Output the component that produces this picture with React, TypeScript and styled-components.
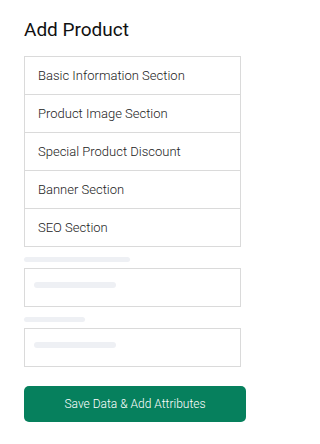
import styled, { createGlobalStyle } from 'styled-components';

const GlobalStyle = createGlobalStyle`
  * { box-sizing: border-box; }
  body {
    margin: 0;
    background: #ffffff;
    font-family: Roboto, 'Liberation Sans', Arial, sans-serif;
  }
`;

const sections = [
  'Basic Information Section',
  'Product Image Section',
  'Special Product Discount',
  'Banner Section',
  'SEO Section',
];

const Page = styled.div`
  width: 270px;
  padding: 18px 24px 0;
  display: flex;
  flex-direction: column;
`;

const Title = styled.h1`
  margin: 0 0 14px;
  font-size: 19px;
  line-height: 24px;
  font-weight: 400;
  color: #111111;
`;

const SectionList = styled.ul`
  width: 217px;
  margin: 0;
  padding: 0;
  list-style: none;
  border: 1px solid #dadada;
`;

const SectionRow = styled.li`
  height: 38px;
  padding: 11px 13px 0;
  font-size: 13px;
  line-height: 16px;
  font-weight: 300;
  color: #222222;
  border-top: 1px solid #dadada;

  &:first-child {
    height: 37px;
    border-top: none;
  }
`;

const Skeleton = styled.div<{ $w: number; $h?: number }>`
  width: ${(p) => p.$w}px;
  height: ${(p) => p.$h ?? 5}px;
  border-radius: 3px;
  background: #eef0f4;
`;

const Field = styled.div<{ $top: number }>`
  display: flex;
  flex-direction: column;
  gap: 6px;
  margin-top: ${(p) => p.$top}px;
`;

const InputBox = styled.div`
  width: 217px;
  height: 39px;
  padding: 13px 0 0 9px;
  border: 1px solid #dadada;
`;

const SaveButton = styled.button`
  margin-top: 19px;
  width: 222px;
  height: 36px;
  border: none;
  border-radius: 5px;
  background: #06805d;
  color: #ffffff;
  font-family: inherit;
  font-size: 12px;
  font-weight: 300;
  cursor: pointer;
`;

export default function App() {
  return (
    <>
      <GlobalStyle />
      <Page>
        <Title>Add Product</Title>
        <SectionList>
          {sections.map((s) => (
            <SectionRow key={s}>{s}</SectionRow>
          ))}
        </SectionList>
        <Field $top={10}>
          <Skeleton $w={106} />
          <InputBox>
            <Skeleton $w={82} $h={6} />
          </InputBox>
        </Field>
        <Field $top={10}>
          <Skeleton $w={61} />
          <InputBox>
            <Skeleton $w={82} $h={6} />
          </InputBox>
        </Field>
        <SaveButton>Save Data &amp; Add Attributes</SaveButton>
      </Page>
    </>
  );
}
